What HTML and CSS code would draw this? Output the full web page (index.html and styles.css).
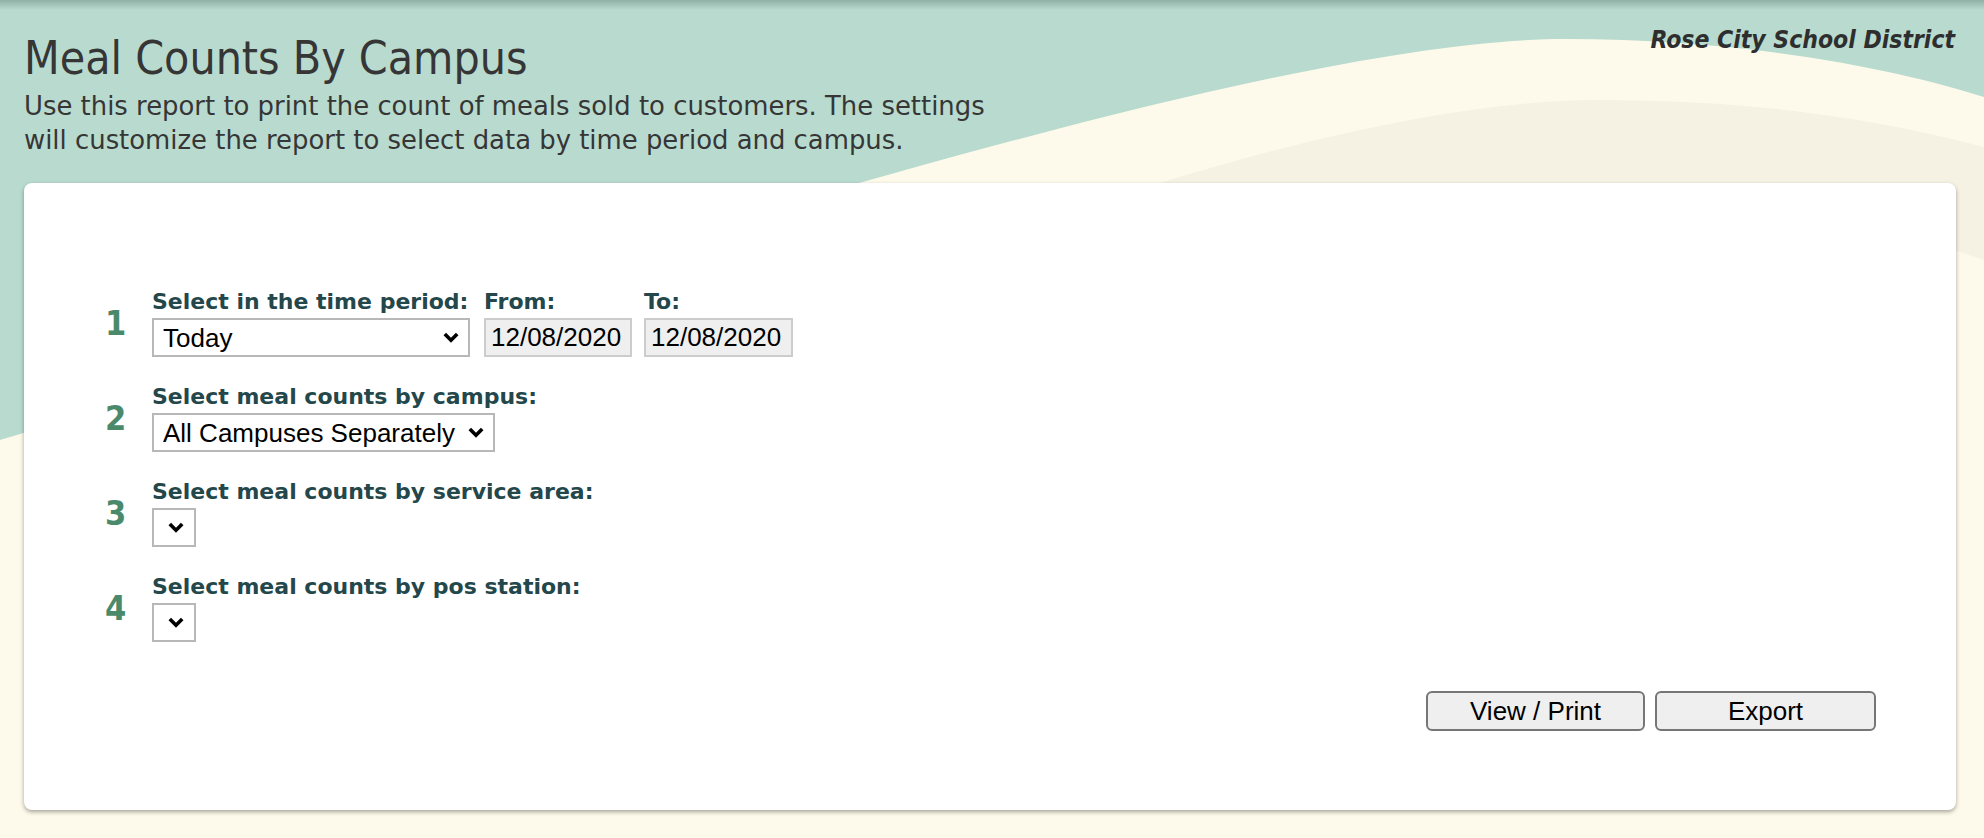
FILE: index.html
```html
<!DOCTYPE html>
<html lang="en">
<head>
<meta charset="utf-8">
<title>Meal Counts By Campus</title>
<link rel="stylesheet" href="styles.css">
</head>
<body>
<div class="page">
  <header class="header">
    <div class="intro">
      <h1 class="title">Meal Counts By Campus</h1>
      <p class="desc">Use this report to print the count of meals sold to customers. The settings will customize the report to select data by time period and campus.</p>
    </div>
    <div class="district">Rose City School District</div>
  </header>

  <main class="card">
    <div class="steps">
      <div class="step">
        <div class="num">1</div>
        <div class="fields">
          <div class="field">
            <label class="label">Select in the time period:</label>
            <select class="select select-period"><option>Today</option></select>
          </div>
          <div class="field">
            <label class="label">From:</label>
            <input class="date" type="text" value="12/08/2020">
          </div>
          <div class="field">
            <label class="label">To:</label>
            <input class="date date-to" type="text" value="12/08/2020">
          </div>
        </div>
      </div>

      <div class="step">
        <div class="num">2</div>
        <div class="fields">
          <div class="field">
            <label class="label">Select meal counts by campus:</label>
            <select class="select select-campus"><option>All Campuses Separately</option></select>
          </div>
        </div>
      </div>

      <div class="step">
        <div class="num">3</div>
        <div class="fields">
          <div class="field">
            <label class="label">Select meal counts by service area:</label>
            <select class="select select-empty"></select>
          </div>
        </div>
      </div>

      <div class="step">
        <div class="num">4</div>
        <div class="fields">
          <div class="field">
            <label class="label">Select meal counts by pos station:</label>
            <select class="select select-empty"></select>
          </div>
        </div>
      </div>
    </div>

    <div class="actions">
      <button class="btn btn-view" type="button">View / Print</button>
      <button class="btn btn-export" type="button">Export</button>
    </div>
  </main>
</div>
</body>
</html>
```

FILE: styles.css
```css
html, body {
  margin: 0;
  padding: 0;
}

body {
  width: 1984px;
  height: 838px;
  overflow: hidden;
  font-family: "DejaVu Sans", sans-serif;
  color: #333;
  background:
    linear-gradient(to bottom, rgba(70, 95, 88, 0.35), rgba(70, 95, 88, 0) 10px),
    url("data:image/svg+xml;utf8,<svg xmlns='http://www.w3.org/2000/svg' width='1984' height='838' viewBox='0 0 1984 838'><rect width='1984' height='838' fill='%23b9dbcf'/><path d='M0,440 C550,280 1250,40 1565,39 C1750,39 1900,70 1984,97 L1984,838 L0,838 Z' fill='%23fefaeb'/><path d='M600,420 C900,250 1350,100 1596,100 C1780,100 1900,125 1984,147 L1984,260 C1900,230 1780,200 1596,200 C1350,200 900,330 600,520 Z' fill='%23f6f2e3'/></svg>") no-repeat 0 0,
    #fefaeb;
}

.page {
  display: flex;
  flex-direction: column;
}

.header {
  display: flex;
  justify-content: space-between;
  align-items: flex-start;
  padding: 26px 29px 0 24px;
}

.intro {
  max-width: 1000px;
}

.title {
  margin: 5px 0 0;
  font-family: "DejaVu Sans Condensed", "DejaVu Sans", sans-serif;
  font-stretch: semi-condensed;
  font-size: 46px;
  line-height: 54px;
  font-weight: normal;
  color: #363636;
}

.desc {
  margin: 4px 0 0;
  font-size: 25.9px;
  line-height: 34px;
  color: #363636;
}

.district {
  font-family: "DejaVu Sans Condensed", "DejaVu Sans", sans-serif;
  font-stretch: semi-condensed;
  font-size: 24.5px;
  line-height: 28px;
  font-weight: bold;
  font-style: italic;
  color: #2e2e2e;
}

.card {
  box-sizing: border-box;
  height: 627px;
  margin: 26px 28px 0 24px;
  padding-top: 106px;
  background: #fff;
  border-radius: 8px;
  box-shadow: 0 2px 4px rgba(0, 0, 0, 0.35);
  display: flex;
  flex-direction: column;
}

.steps {
  display: flex;
  flex-direction: column;
  gap: 27px;
}

.step {
  display: flex;
  align-items: center;
}

.num {
  width: 47px;
  margin-left: 81px;
  font-family: "DejaVu Sans Condensed", "DejaVu Sans", sans-serif;
  font-stretch: semi-condensed;
  font-size: 34px;
  font-weight: bold;
  color: #4a8a6b;
  line-height: 1;
}

.fields {
  display: flex;
  gap: 12px;
}

.field {
  display: flex;
  flex-direction: column;
}

.label {
  font-size: 22px;
  line-height: 26px;
  font-weight: bold;
  color: #23474a;
  margin-bottom: 3px;
  white-space: nowrap;
}

.select {
  appearance: none;
  -webkit-appearance: none;
  box-sizing: border-box;
  height: 39px;
  margin: 0;
  padding: 0 30px 0 9px;
  border: 2px solid #b8b8b8;
  border-radius: 0;
  background: #fff url("data:image/svg+xml;utf8,<svg xmlns='http://www.w3.org/2000/svg' width='16' height='11' viewBox='0 0 16 11'><path d='M1.8,2 L8,8.2 L14.2,2' fill='none' stroke='%23000' stroke-width='3.6'/></svg>") no-repeat right 9px center;
  font-family: "Liberation Sans", Arial, sans-serif;
  font-size: 26px;
  color: #000;
}

.select-period {
  width: 318px;
  margin-right: 2px;
}

.select-campus {
  width: 343px;
}

.select-empty {
  width: 44px;
  background-position: right 10px center;
}

.date {
  box-sizing: border-box;
  width: 148px;
  height: 39px;
  margin: 0;
  padding: 0 5px;
  border: 2px solid #cccccc;
  border-radius: 0;
  background: #efefef;
  font-family: "Liberation Sans", Arial, sans-serif;
  font-size: 26px;
  color: #000;
  outline: none;
}

.date-to {
  width: 149px;
}

.actions {
  display: flex;
  justify-content: flex-end;
  gap: 10px;
  margin-top: 49px;
  padding-right: 80px;
}

.btn {
  box-sizing: border-box;
  height: 40px;
  margin: 0;
  padding: 0;
  border: 2px solid #767676;
  border-radius: 6px;
  background: #efefef;
  font-family: "Liberation Sans", Arial, sans-serif;
  font-size: 26px;
  color: #000;
}

.btn-view {
  width: 219px;
}

.btn-export {
  width: 221px;
}
```
